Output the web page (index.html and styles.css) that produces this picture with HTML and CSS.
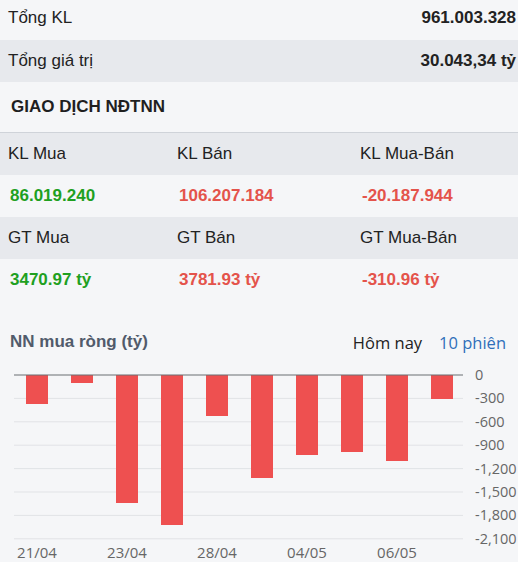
FILE: index.html
```html
<!DOCTYPE html>
<html lang="vi">
<head>
    <meta charset="UTF-8">
    <title>Giao dịch NĐTNN</title>
    <link rel="stylesheet" href="styles.css">
</head>
<body>
    <div class="panel">
        <div class="info-row first">
            <span>Tổng KL</span>
            <span class="info-value">961.003.328</span>
        </div>
        <div class="info-row shaded">
            <span>Tổng giá trị</span>
            <span class="info-value">30.043,34 tỷ</span>
        </div>

        <h2 class="section-title">GIAO DỊCH NĐTNN</h2>

        <div class="trade-table">
            <div class="trade-row head">
                <div>KL Mua</div>
                <div>KL Bán</div>
                <div>KL Mua-Bán</div>
            </div>
            <div class="trade-row values">
                <div class="up">86.019.240</div>
                <div class="down">106.207.184</div>
                <div class="down">-20.187.944</div>
            </div>
            <div class="trade-row head">
                <div>GT Mua</div>
                <div>GT Bán</div>
                <div>GT Mua-Bán</div>
            </div>
            <div class="trade-row values">
                <div class="up">3470.97 tỷ</div>
                <div class="down">3781.93 tỷ</div>
                <div class="down">-310.96 tỷ</div>
            </div>
        </div>

        <div class="chart-head">
            <span class="chart-title">NN mua ròng (tỷ)</span>
            <div class="chart-tabs">
                <span class="tab">Hôm nay</span>
                <span class="tab active">10 phiên</span>
            </div>
        </div>

        <svg class="chart" width="518" height="205" viewBox="0 0 518 205">
            <!-- grid lines -->
            <g class="grid">
                <line x1="14" y1="41.4" x2="463" y2="41.4"/>
                <line x1="14" y1="64.8" x2="463" y2="64.8"/>
                <line x1="14" y1="88.2" x2="463" y2="88.2"/>
                <line x1="14" y1="111.6" x2="463" y2="111.6"/>
                <line x1="14" y1="135" x2="463" y2="135"/>
                <line x1="14" y1="158.4" x2="463" y2="158.4"/>
                <line x1="14" y1="181.8" x2="463" y2="181.8"/>
            </g>
            <!-- bars -->
            <g class="bars">
                <rect x="26" y="18" width="22" height="29"/>
                <rect x="71" y="18" width="22" height="8"/>
                <rect x="116" y="18" width="22" height="128"/>
                <rect x="161" y="18" width="22" height="150"/>
                <rect x="206" y="18" width="22" height="41"/>
                <rect x="251" y="18" width="22" height="103"/>
                <rect x="296" y="18" width="22" height="80"/>
                <rect x="341" y="18" width="22" height="77"/>
                <rect x="386" y="18" width="22" height="86"/>
                <rect x="431" y="18" width="22" height="24"/>
            </g>
            <line class="zero" x1="14" y1="18" x2="463" y2="18"/>
            <!-- y axis -->
            <g class="y-labels">
                <text x="475" y="23">0</text>
                <text x="475" y="46.4">-300</text>
                <text x="475" y="69.8">-600</text>
                <text x="475" y="93.2">-900</text>
                <text x="475" y="116.6">-1,200</text>
                <text x="475" y="140">-1,500</text>
                <text x="475" y="163.4">-1,800</text>
                <text x="475" y="186.8">-2,100</text>
            </g>
            <!-- x axis -->
            <g class="x-labels">
                <text x="37" y="201">21/04</text>
                <text x="127" y="201">23/04</text>
                <text x="217" y="201">28/04</text>
                <text x="307" y="201">04/05</text>
                <text x="397" y="201">06/05</text>
            </g>
        </svg>
    </div>
</body>
</html>
```

FILE: styles.css
```css
body {
    margin: 0;
    padding: 0;
    background-color: #f5f6f8;
    font-family: "Liberation Sans", Arial, sans-serif;
    font-size: 17px;
    color: #222;
    overflow: hidden;
}

.panel {
    width: 518px;
}

.info-row {
    display: flex;
    justify-content: space-between;
    align-items: center;
    height: 42px;
    padding: 0 2px 0 8px;
}

.info-row.first {
    height: 40px;
    padding-bottom: 4px;
    box-sizing: border-box;
}

.info-row.shaded {
    background-color: #e7e9ed;
}

.info-value {
    font-weight: bold;
}

.section-title {
    margin: 0;
    height: 50px;
    display: flex;
    align-items: center;
    padding-left: 11px;
    font-size: 17px;
    font-weight: bold;
    color: #1f1f1f;
}

.trade-table {
    border-top: 1px solid #cfd3d9;
}

.trade-row {
    display: grid;
    grid-template-columns: 169px 183px auto;
    align-items: center;
    height: 42px;
    padding-left: 8px;
}

.trade-row.head {
    background-color: #e7e9ed;
}

.trade-row.values {
    font-weight: bold;
    padding-left: 10px;
}

.up {
    color: #1fa01f;
}

.down {
    color: #e4534b;
}

.chart-head {
    display: flex;
    justify-content: space-between;
    align-items: center;
    height: 30px;
    margin-top: 26px;
    padding: 0 12px 0 10px;
}

.chart-title {
    font-weight: bold;
    color: #515b6b;
}

.chart-tabs {
    display: flex;
    gap: 17px;
    font-family: "Open Sans", sans-serif;
    font-size: 16.5px;
}

.tab {
    color: #222;
}

.tab.active {
    color: #2f6fba;
}

.chart {
    display: block;
}

.grid line {
    stroke: #e1e3e6;
    stroke-width: 1;
}

.zero {
    stroke: #6b6e72;
    stroke-width: 1.2;
}

.bars rect {
    fill: #ee5050;
}

.y-labels text {
    font-family: "Open Sans", sans-serif;
    font-size: 14.5px;
    fill: #666;
}

.x-labels text {
    font-family: "Open Sans", sans-serif;
    font-size: 15px;
    fill: #666;
    text-anchor: middle;
}
```
